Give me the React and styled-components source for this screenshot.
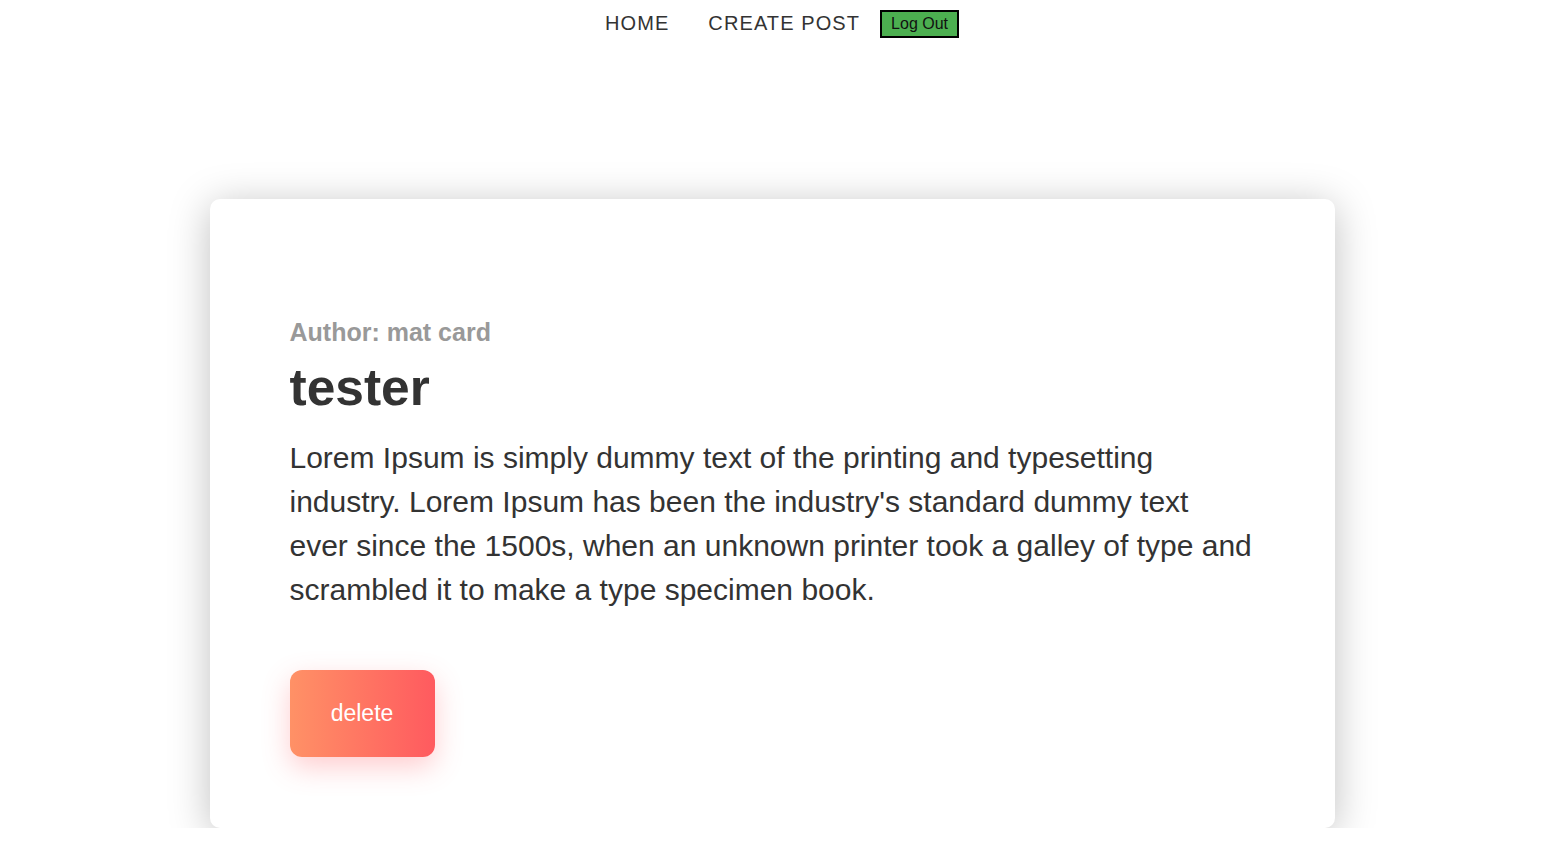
import styled, { createGlobalStyle } from "styled-components";

const GlobalStyle = createGlobalStyle`
  * {
    box-sizing: border-box;
  }

  body {
    margin: 0;
    background: #fff;
    font-family: "Liberation Sans", Arial, sans-serif;
  }
`;

const App = () => {
  const post = {
    author: "mat card",
    title: "tester",
    text: "Lorem Ipsum is simply dummy text of the printing and typesetting industry. Lorem Ipsum has been the industry's standard dummy text ever since the 1500s, when an unknown printer took a galley of type and scrambled it to make a type specimen book.",
  };

  return (
    <>
      <GlobalStyle />
      <Nav>
        <NavLink href="#">HOME</NavLink>
        <NavLink href="#">CREATE POST</NavLink>
        <LogOutButton>Log Out</LogOutButton>
      </Nav>

      <HomePage>
        <Post>
          <Author>Author: {post.author}</Author>
          <Title>{post.title}</Title>
          <PostText>{post.text}</PostText>
          <DeleteButton>delete</DeleteButton>
        </Post>
      </HomePage>
    </>
  );
};

export default App;

const Nav = styled.nav`
  display: flex;
  justify-content: center;
  align-items: center;
  height: 47px;
  padding-left: 21px;
`;

const NavLink = styled.a`
  margin-right: 39px;
  font-size: 20px;
  letter-spacing: 1.1px;
  color: #333;
  text-decoration: none;

  &:nth-of-type(2) {
    margin-right: 20px;
  }
`;

const LogOutButton = styled.button`
  height: 28px;
  padding: 0 9px;
  font-family: "Liberation Sans", Arial, sans-serif;
  font-size: 16px;
  color: #111;
  background-color: #4caf50;
  border: 2px solid #000;
  cursor: pointer;
`;

const HomePage = styled.main`
  display: flex;
  justify-content: center;
  padding: 152px 0 0 1px;
`;

const Post = styled.div`
  width: 1125px;
  padding: 119px 80px 71px;
  background: #fff;
  border-radius: 10px;
  box-shadow: 0 6px 40px rgba(0, 0, 0, 0.25);
`;

const Author = styled.h3`
  margin: 0;
  font-size: 25px;
  font-weight: 700;
  color: #999;
`;

const Title = styled.h1`
  margin: 10px 0 0;
  font-size: 51.5px;
  font-weight: 700;
  color: #333;
`;

const PostText = styled.p`
  max-width: 962.5px;
  margin: 19px 0 0;
  font-size: 30px;
  line-height: 44px;
  color: #333;
`;

const DeleteButton = styled.button`
  display: block;
  width: 145px;
  height: 87px;
  margin-top: 58px;
  font-family: "Liberation Sans", Arial, sans-serif;
  font-size: 23px;
  color: #fff;
  background: linear-gradient(90deg, #ff9166, #ff5a5f);
  border: none;
  border-radius: 12px;
  box-shadow: 0 10px 28px rgba(255, 90, 95, 0.3);
  cursor: pointer;
`;
